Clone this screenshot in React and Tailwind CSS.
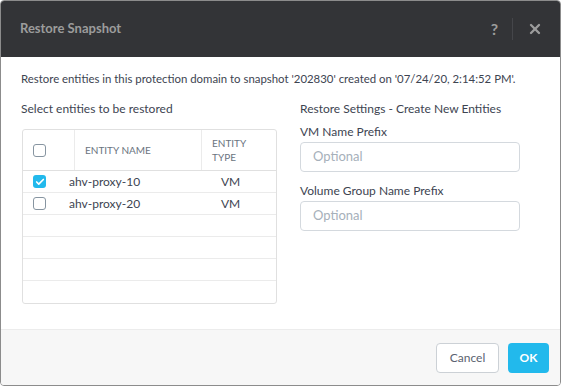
import { Check, X } from 'lucide-react';

const font = { fontFamily: 'Lato, "Open Sans", sans-serif' };

function Box({ checked }) {
  return checked ? (
    <span className="w-[13px] h-[13px] rounded-[3px] bg-[#22b9ec] flex items-center justify-center">
      <Check className="w-[10px] h-[10px] text-white" strokeWidth={4} />
    </span>
  ) : (
    <span className="w-[13px] h-[13px] rounded-[3px] border border-[#8795a1] bg-white" />
  );
}

const rows = [
  { name: 'ahv-proxy-10', type: 'VM', checked: true },
  { name: 'ahv-proxy-20', type: 'VM', checked: false },
  null,
  null,
  null,
  null,
];

function Field({ label }) {
  return (
    <div className="flex flex-col">
      <div className="text-[12px] text-[#3d4451] leading-[14px] mb-[3px]">{label}</div>
      <div className="w-[220px] h-[30px] border border-[#d4d9de] rounded-[4px] flex items-center px-[12px] text-[13px] text-[#a6b0ba]">
        Optional
      </div>
    </div>
  );
}

export default function App() {
  return (
    <div className="w-[562px] h-[386px] bg-white" style={font}>
      <div className="w-[561px] h-[386px] border border-[#8c8c8c] rounded-[4px] overflow-hidden flex flex-col">
        <div className="h-[56px] bg-[#333437] flex items-center pl-[19px] pr-[17px] shrink-0">
          <div className="text-[13px] font-bold text-[#9c9c9c] flex-1">Restore Snapshot</div>
          <span className="text-[16px] font-bold text-[#9c9c9c] mr-[14px]">?</span>
          <span className="w-px h-[22px] bg-[#45464a] mr-[14px]" />
          <X className="w-[16px] h-[16px] text-[#9c9c9c]" strokeWidth={3.5} />
        </div>
        <div className="flex-1 px-[20px] pt-[14px] text-[#333]">
          <div className="text-[11.4px] leading-[16px] text-[#3d4451] whitespace-nowrap">
            Restore entities in this protection domain to snapshot '202830' created on '07/24/20, 2:14:52 PM'.
          </div>
          <div className="flex mt-[14px]">
            <div className="w-[256px] mr-[23px]">
              <div className="text-[12px] leading-[16px] text-[#3d4451] mb-[12px]">Select entities to be restored</div>
              <div className="ml-[1px] border border-[#e0e0e0] rounded-[3px] overflow-hidden">
                <div className="h-[41px] flex border-b border-[#e0e0e0] text-[10px] text-[#6b7480] uppercase">
                  <div className="w-[52px] border-r border-[#ebebeb] flex items-center pl-[10px]">
                    <Box />
                  </div>
                  <div className="w-[127px] border-r border-[#ebebeb] flex items-center pl-[10px]">Entity Name</div>
                  <div className="flex-1 flex flex-col justify-center pl-[10px] leading-[14px]">
                    <span>Entity</span>
                    <span>Type</span>
                  </div>
                </div>
                {rows.map((r, i) => (
                  <div key={i} className={`h-[22px] flex items-center text-[12px] text-[#3d4451] ${i < rows.length - 1 ? 'border-b border-[#ebebeb]' : ''}`}>
                    {r && (
                      <>
                        <div className="w-[46px] pl-[10px] flex items-center"><Box checked={r.checked} /></div>
                        <div className="w-[152px]">{r.name}</div>
                        <div>{r.type}</div>
                      </>
                    )}
                  </div>
                ))}
              </div>
            </div>
            <div className="flex flex-col">
              <div className="text-[12px] leading-[16px] text-[#3d4451] mb-[8px]">Restore Settings - Create New Entities</div>
              <Field label="VM Name Prefix" />
              <div className="h-[12px]" />
              <Field label="Volume Group Name Prefix" />
            </div>
          </div>
        </div>
        <div className="h-[56px] bg-[#f7f7f7] border-t border-[#ececec] flex items-center justify-end pr-[11px] gap-[9px] shrink-0">
          <button className="w-[63px] h-[30px] bg-white border border-[#ccd1d6] rounded-[4px] text-[12px] text-[#5a6270]">Cancel</button>
          <button className="w-[41px] h-[30px] bg-[#22b9ec] rounded-[4px] text-[12px] font-bold text-white">OK</button>
        </div>
      </div>
    </div>
  );
}
